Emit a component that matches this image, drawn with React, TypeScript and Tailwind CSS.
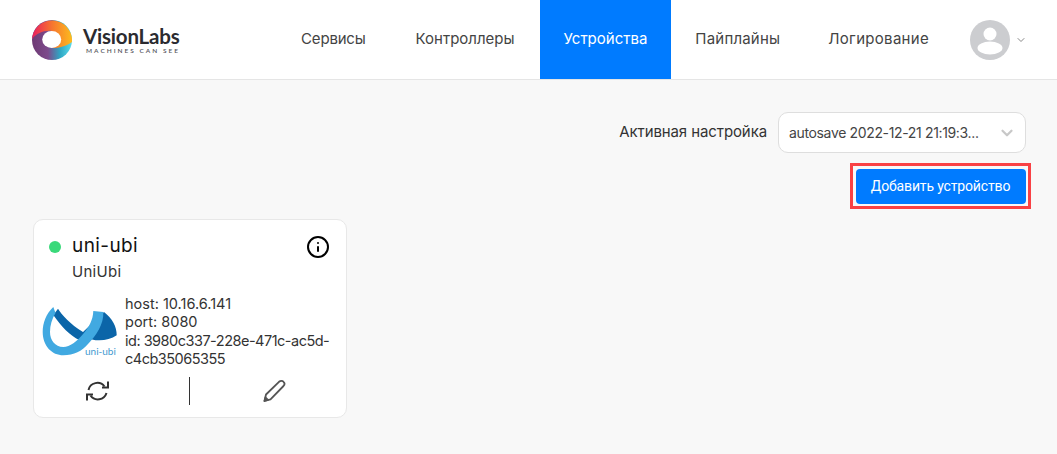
import { Info, ChevronDown } from 'lucide-react'

const NAV = [
  { label: 'Сервисы', spacing: 'tracking-[-0.2px] mr-[2px]' },
  { label: 'Контроллеры', spacing: 'tracking-normal mr-[1px]' },
  { label: 'Устройства', spacing: 'tracking-normal' },
  { label: 'Пайплайны', spacing: 'tracking-[0.2px]' },
  { label: 'Логирование', spacing: 'tracking-[0.3px]' },
]

function Logo() {
  return (
    <div className="flex items-center gap-[11px]">
      <svg width="40" height="40" viewBox="0 0 40 40">
        <defs>
          <linearGradient id="top" x1="0" y1="0" x2="1" y2="0">
            <stop offset="0" stopColor="#ea1c5f" />
            <stop offset="0.5" stopColor="#f6752f" />
            <stop offset="1" stopColor="#fdbb1e" />
          </linearGradient>
          <linearGradient id="bottom" x1="0" y1="0" x2="1" y2="0">
            <stop offset="0" stopColor="#6e3a74" />
            <stop offset="0.4" stopColor="#7d4a8c" />
            <stop offset="0.7" stopColor="#2ea7c4" />
            <stop offset="1" stopColor="#5cdcec" />
          </linearGradient>
        </defs>
        <circle cx="20" cy="20" r="20" fill="url(#bottom)" />
        <path d="M0 19A20 20 0 0 1 40 22C34 26 28 28 20 28L20 11C12 10 5 13 0 19Z" fill="url(#top)" />
        <ellipse cx="19.700" cy="19.500" rx="9.500" ry="8.500" fill="#fff" />
      </svg>
      <div className="flex flex-col items-start">
        <span className="text-[20.500px] leading-[22px] font-bold text-[#2b2b30] tracking-[-0.2px] font-['Lato',sans-serif]">VisionLabs</span>
        <span className="text-[6.500px] leading-[8px] ml-[3px] text-[#55555c] tracking-[2px] font-semibold font-['Lato',sans-serif]">MACHINES CAN SEE</span>
      </div>
    </div>
  )
}

function UniUbiLogo() {
  return (
    <svg width="84" height="60" viewBox="0 0 84 60" className="shrink-0">
      <path d="M20 6.700C24 13 32 22 45 30L66 10C74 16 79 25 78.700 33.300C72 38 62 39.500 54 37.500L42 38.300C32 34 23 24 15.300 13Z" fill="#0b65a8" />
      <path d="M15.300 5C8 12 4.700 21 4.700 30C4.700 44 14 53.300 25.300 53.300C36 53.300 44 49 50 42C58 34 66 22 65.300 10L55.300 9C55 18 51 25 45.300 31.700C39 39 32 45 25.300 45C17 45 12 38 12 30C12 23 14 17 17.500 11Z" fill="#41a9e1" />
      <text x="47" y="53" fontSize="10" fill="#3f9ad0" className="font-['Lato',sans-serif]">uni-ubi</text>
    </svg>
  )
}

function SyncIcon() {
  return (
    <svg width="25" height="24" viewBox="0 0 25 24" fill="none" stroke="#333" strokeWidth="2">
      <path d="M3.500 11A9 9 0 0 1 19.500 7.500" />
      <path d="M23 2.500V8.500H17" />
      <path d="M21.500 14A9 9 0 0 1 5.500 16.500" />
      <path d="M2 21.500V15.500H8" />
    </svg>
  )
}

function PencilIcon() {
  return (
    <svg width="24" height="24" viewBox="0 0 24 24" fill="none" stroke="#555" strokeWidth="1.800" strokeLinejoin="round">
      <path d="M2.500 22L4 15.500L17 2.800C18.500 1.500 20.500 1.500 21.500 2.800C22.800 4 22.600 5.800 21.500 7L8.500 20.300Z" />
      <path d="M2.500 22L3.400 18.500L6 21Z" fill="#555" />
    </svg>
  )
}

function DeviceCard() {
  return (
    <div className="w-[314px] h-[199px] bg-white rounded-[10px] border border-[#e8e8e8] pl-[15px] pr-[16px] pt-[13px] flex flex-col">
      <div className="flex items-center justify-between h-[27px]">
        <div className="flex items-center gap-[11px]">
          <span className="w-3 h-3 rounded-full bg-[#3ad97a]" />
          <span className="text-[19px] text-[#111] tracking-[0.4px]">uni-ubi</span>
        </div>
        <Info className="w-6 h-6 text-black" strokeWidth={2} />
      </div>
      <div className="pl-[23px] mt-[2px] text-[15px] leading-5 text-[#333] tracking-[0.3px]">UniUbi</div>
      <div className="flex items-center gap-[3px] mt-[13px] -ml-[11px]">
        <UniUbiLogo />
        <div className="text-[14.500px] leading-[18.300px] text-[#333]">
          <div>host: 10.16.6.141</div>
          <div>port: 8080</div>
          <div className="w-[206px] tracking-[-0.5px]">id: 3980c337-228e-471c-ac5d-c4cb35065355</div>
        </div>
      </div>
      <div className="grid grid-cols-[156px_1fr] mt-[9px] -ml-[15px] -mr-[16px]">
        <div className="flex items-center h-[28px] border-r border-[#333] pl-[51px]">
          <SyncIcon />
        </div>
        <div className="flex items-center h-[28px] pl-[72px]">
          <PencilIcon />
        </div>
      </div>
    </div>
  )
}

export default function App() {
  return (
    <div className="w-[1057px] h-[454px] overflow-hidden bg-[#f8f8f8] font-['Inter',sans-serif]">
      <header className="h-[80px] bg-white border-b border-[#e5e5e5] flex items-center pl-[32px]">
        <Logo />
        <nav className="flex h-[79px] ml-auto">
          {NAV.map((item) => (
            <div
              key={item.label}
              className={
                'flex items-center px-[24px] text-[15px] ' + item.spacing + ' ' +
                (item.label === 'Устройства' ? 'bg-[#007bff] text-white' : 'text-[#444]')
              }
            >
              {item.label}
            </div>
          ))}
        </nav>
        <div className="flex items-center gap-[5px] ml-[17px] pr-[30px]">
          <svg width="40" height="40" viewBox="0 0 40 40">
            <circle cx="20" cy="20" r="20" fill="#cccdd0" />
            <circle cx="20" cy="14" r="6.500" fill="#fff" />
            <ellipse cx="20" cy="28" rx="12.500" ry="6.500" fill="#fff" />
          </svg>
          <ChevronDown className="w-[12px] h-[12px] text-[#888]" />
        </div>
      </header>
      <main className="px-[31px] pt-[32px] flex flex-col">
        <div className="flex items-center justify-end gap-[11px]">
          <span className="text-[15px] text-[#333] tracking-[-0.1px]">Активная настройка</span>
          <div className="w-[248px] h-[41px] bg-white border border-[#dedede] rounded-[10px] flex items-center justify-between pl-[10px] pr-[9px]">
            <span className="text-[14px] text-[#444] tracking-[-0.35px]">autosave 2022-12-21 21:19:3...</span>
            <ChevronDown className="w-[18px] h-[18px] text-[#c8c8c8]" strokeWidth={3} />
          </div>
        </div>
        <div className="flex justify-end -mr-[5px] mt-[10px]">
          <div className="w-[181px] h-[46px] border-[3px] border-[#f94144] flex items-center justify-center">
            <button className="w-[170px] h-[35px] bg-[#007bff] rounded-[4px] text-white text-[14px] tracking-[-0.15px] font-['Roboto',sans-serif]">
              Добавить устройство
            </button>
          </div>
        </div>
        <div className="mt-[10px] ml-[2px]">
          <DeviceCard />
        </div>
      </main>
    </div>
  )
}
